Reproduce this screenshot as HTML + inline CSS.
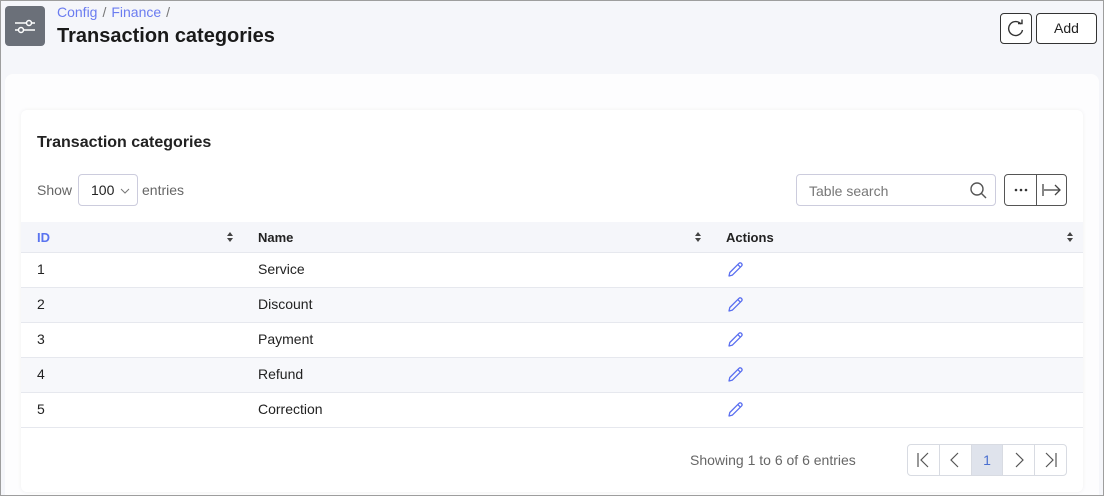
<!DOCTYPE html>
<html><head><style>
*{box-sizing:border-box;margin:0;padding:0}
html,body{width:1104px;height:496px;overflow:hidden}
body{background:#f5f6fa;font-family:"Liberation Sans",sans-serif;position:relative;color:#222}
.abs{position:absolute}
.frame{left:0;top:0;width:1104px;height:496px;border:1px solid #9e9e9e;z-index:10;pointer-events:none}
.icon{left:5px;top:6px;width:40px;height:40px;background:#6b7079;border-radius:4px}
.bc{left:57px;top:4px;font-size:14px;color:#6b7cf0}
.bc span{color:#777;margin:0 5px}
h1{position:absolute;left:57px;top:25px;font-size:20px;font-weight:bold;color:#1a1a1a}
.btn{border:1px solid #333;border-radius:4px;background:#fff;font-size:14px;text-align:center}
.panel{left:5px;top:74px;width:1094px;height:421px;border-radius:8px 8px 0 0;background:#fdfdfe}
.card{left:21px;top:110px;width:1062px;height:382px;background:#fff;border-radius:6px;box-shadow:0 0 4px rgba(0,0,0,.06)}
.t{font-size:14px;color:#333}
.row{position:absolute;left:21px;width:1062px;height:35px;border-bottom:1px solid #e6e8ee;font-size:14px;color:#222}
.row div{position:absolute;top:8px}
.stripe{background:#f7f8fb}
.pg div{width:32px;border-right:1px solid #d8dbe2;display:flex;align-items:center;justify-content:center}
</style></head><body>
<div class="abs frame"></div>
<div class="abs icon"><svg width="40" height="40"><g stroke="#fff" stroke-width="1.5" fill="none"><line x1="10" y1="17" x2="30" y2="17"/><line x1="10" y1="24" x2="30" y2="24"/><circle cx="24" cy="17" r="2.5" fill="#6b7079"/><circle cx="16" cy="24" r="2.5" fill="#6b7079"/></g></svg></div>
<div class="abs bc">Config<span>/</span>Finance<span>/</span></div>
<h1>Transaction categories</h1>
<div class="abs btn" style="left:1000px;top:13px;width:32px;height:31px"><svg width="30" height="29"><path d="M20 10 A7 7 0 1 0 21.5 16" stroke="#333" stroke-width="1.4" fill="none"/><path d="M17 9.5 L21 9.5 L21 5.5" stroke="#333" stroke-width="1.4" fill="none"/></svg></div>
<div class="abs btn" style="left:1036px;top:13px;width:61px;height:31px;line-height:29px">Add</div>
<div class="abs panel"></div>
<div class="abs card"></div>
<div class="abs" style="left:37px;top:134px;font-size:16px;font-weight:bold;color:#222">Transaction categories</div>
<div class="abs t" style="left:37px;top:182px;color:#666">Show</div>
<div class="abs" style="left:78px;top:174px;width:60px;height:32px;border:1px solid #ccd;border-radius:4px;font-size:14px;padding:7px 0 0 12px">100
<svg class="abs" style="left:41px;top:12px" width="10" height="8"><path d="M1 2 L5 6 L9 2" stroke="#777" fill="none"/></svg></div>
<div class="abs t" style="left:142px;top:182px;color:#666">entries</div>
<div class="abs" style="left:796px;top:174px;width:200px;height:32px;border:1px solid #ccd;border-radius:4px;font-size:14px;color:#777;padding:8px 0 0 12px">Table search
<svg class="abs" style="left:172px;top:6px" width="20" height="20"><circle cx="8" cy="8" r="6" stroke="#555" stroke-width="1.4" fill="none"/><line x1="12.5" y1="12.5" x2="17" y2="17" stroke="#555" stroke-width="1.4"/></svg></div>
<div class="abs" style="left:1004px;top:174px;width:63px;height:32px;border:1px solid #555;border-radius:4px"><div class="abs" style="left:31px;top:0;width:1px;height:30px;background:#555"></div>
<svg class="abs" style="left:8px;top:12px" width="16" height="6"><circle cx="3" cy="3" r="1.3" fill="#333"/><circle cx="8" cy="3" r="1.3" fill="#333"/><circle cx="13" cy="3" r="1.3" fill="#333"/></svg>
<svg class="abs" style="left:33px;top:5px" width="28" height="20"><line x1="5" y1="4" x2="5" y2="16" stroke="#444" stroke-width="1.3"/><line x1="6" y1="10" x2="22" y2="10" stroke="#444" stroke-width="1.3"/><path d="M17 5 L22 10 L17 15" stroke="#444" stroke-width="1.3" fill="none"/></svg></div>
<div class="row" style="top:222px;height:31px;background:#f5f6fa;font-weight:bold;font-size:13px">
<div style="left:16px;color:#5a74f0">ID</div><div style="left:237px">Name</div><div style="left:705px">Actions</div>
</div>
<svg class="abs" style="left:227px;top:231px" width="870" height="12"><defs><path id="s" d="M0 5 L3 1 L6 5 Z M0 7 L3 11 L6 7 Z" fill="#444"/></defs><use href="#s"/><use href="#s" x="468"/><use href="#s" x="840"/></svg>
<div class="row" style="top:253px"><div style="left:16px">1</div><div style="left:237px">Service</div></div>
<div class="row stripe" style="top:288px"><div style="left:16px">2</div><div style="left:237px">Discount</div></div>
<div class="row" style="top:323px"><div style="left:16px">3</div><div style="left:237px">Payment</div></div>
<div class="row stripe" style="top:358px"><div style="left:16px">4</div><div style="left:237px">Refund</div></div>
<div class="row" style="top:393px"><div style="left:16px">5</div><div style="left:237px">Correction</div></div>
<svg class="abs" style="left:727px;top:261px" width="18" height="170">
<defs><path id="p" d="M2 15 L2.8 11.5 L12 2.3 Q13.2 1.2 14.5 2.4 Q15.7 3.7 14.6 4.9 L5.4 14.1 Z M10.8 3.6 L13.3 6.1" stroke="#5a6ff0" stroke-width="1.3" fill="none" stroke-linejoin="round"/></defs>
<use href="#p"/><use href="#p" y="35"/><use href="#p" y="70"/><use href="#p" y="105"/><use href="#p" y="140"/></svg>
<div class="abs t" style="left:690px;top:452px;color:#666">Showing 1 to 6 of 6 entries</div>
<div class="abs pg" style="left:907px;top:444px;width:160px;height:32px;border:1px solid #d8dbe2;border-radius:4px;display:flex;overflow:hidden;font-size:14px;color:#555">
<div><svg width="16" height="16"><path d="M3 1 V15 M13 1 L6 8 L13 15" stroke="#555" stroke-width="1.2" fill="none"/></svg></div>
<div><svg width="16" height="16"><path d="M11 1 L4 8 L11 15" stroke="#555" stroke-width="1.2" fill="none"/></svg></div>
<div style="background:#dfe3ec;color:#4a6fd0">1</div>
<div><svg width="16" height="16"><path d="M5 1 L12 8 L5 15" stroke="#555" stroke-width="1.2" fill="none"/></svg></div>
<div style="border-right:none;width:31px"><svg width="16" height="16"><path d="M13 1 V15 M3 1 L10 8 L3 15" stroke="#555" stroke-width="1.2" fill="none"/></svg></div>
</div>
</body></html>
